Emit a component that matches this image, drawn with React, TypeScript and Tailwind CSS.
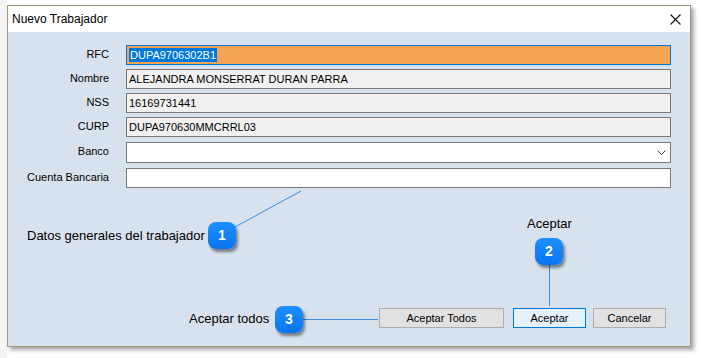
import React from "react";

const Field = ({
  label,
  children,
  className,
  mt,
}: {
  label: string;
  children?: React.ReactNode;
  className: string;
  mt: string;
}) => (
  <div className={`flex items-center ${mt}`}>
    <div className="w-[101px] shrink-0 text-right text-[11px] leading-[14px] text-[#000] -mt-[3px]">{label}</div>
    <div className={`ml-[17px] w-[545px] flex items-center pl-[2px] text-[11px] text-black ${className}`}>{children}</div>
  </div>
);

const Badge = ({ n, cls }: { n: string; cls: string }) => (
  <div
    className={`absolute w-[28px] h-[27px] rounded-[8px] bg-gradient-to-b from-[#1d8fff] to-[#0a75ee] text-white font-bold text-[14px] flex items-center justify-center shadow-[2px_3px_3px_rgba(0,0,0,0.45)] ${cls}`}
  >
    {n}
  </div>
);

export default function App() {
  return (
    <div className="w-[701px] h-[358px] bg-white relative overflow-hidden font-['Liberation_Sans',Arial,sans-serif]">
      <div className="absolute left-0 top-0 w-[7px] h-[358px] bg-[#f4f4f4]" />
      <div className="ml-[7px] mt-[5px] w-[684px] h-[342px] border border-[#9d9878] shadow-[3px_3px_4px_rgba(0,0,0,0.35)] flex flex-col relative">
        <div className="h-[26px] bg-white flex items-center justify-between pl-[4px] pr-[9px] shrink-0">
          <span className="text-[12px] text-black">Nuevo Trabajador</span>
          <svg width="11" height="11" viewBox="0 0 11 11">
            <path d="M0.5 0.5 L10.5 10.5 M10.5 0.5 L0.5 10.5" stroke="#111" strokeWidth="1.1" />
          </svg>
        </div>
        <div className="flex-1 bg-[#d8e2ee] relative flex flex-col">
          <div className="flex flex-col pt-[13px]">
            <Field label="RFC" mt="" className="h-[20px] border border-[#0078d7] bg-[#f5a454]">
              <span className="bg-[#0078d7] text-white leading-[14px] px-[1px]">DUPA9706302B1</span>
            </Field>
            <Field label="Nombre" mt="mt-[4px]" className="h-[20px] border border-[#7a7a7a] bg-[#f0f0f0]">
              ALEJANDRA MONSERRAT DURAN PARRA
            </Field>
            <Field label="NSS" mt="mt-[4px]" className="h-[20px] border border-[#7a7a7a] bg-[#f0f0f0]">
              16169731441
            </Field>
            <Field label="CURP" mt="mt-[4px]" className="h-[20px] border border-[#7a7a7a] bg-[#f0f0f0]">
              DUPA970630MMCRRL03
            </Field>
            <Field label="Banco" mt="mt-[5px]" className="h-[21px] border border-[#7a7a7a] bg-white justify-end pr-[4px]">
              <svg width="9" height="5" viewBox="0 0 9 5">
                <polyline points="0.5,0.5 4.5,4.5 8.5,0.5" fill="none" stroke="#444" strokeWidth="1" />
              </svg>
            </Field>
            <Field label="Cuenta Bancaria" mt="mt-[5px]" className="h-[20px] border border-[#7a7a7a] bg-white" />
          </div>
          <div className="flex-1" />
          <div className="flex justify-end pr-[24px] pb-[18px] text-[11px] text-black">
            <div className="w-[125px] h-[20px] border border-[#adadad] bg-[#e1e1e1] flex items-center justify-center">Aceptar Todos</div>
            <div className="ml-[9px] w-[73px] h-[20px] border border-[#0078d7] bg-[#e5f1fb] flex items-center justify-center">Aceptar</div>
            <div className="ml-[7px] w-[73px] h-[20px] border border-[#adadad] bg-[#e1e1e1] flex items-center justify-center">Cancelar</div>
          </div>

          <svg className="absolute inset-0 pointer-events-none" width="682" height="314">
            <line x1="293" y1="159" x2="227" y2="195" stroke="#3a8ee6" strokeWidth="1" />
            <line x1="541.5" y1="232" x2="541.5" y2="274" stroke="#3a8ee6" strokeWidth="1" />
            <line x1="295" y1="287.5" x2="370" y2="287.5" stroke="#3a8ee6" strokeWidth="1" />
          </svg>

          <div className="absolute left-[19px] top-[196px] text-[13px] leading-[16px] text-black whitespace-nowrap">Datos generales del trabajador</div>
          <Badge n="1" cls="left-[200px] top-[190px]" />
          <div className="absolute left-[519px] top-[184px] text-[13px] leading-[16px] text-black whitespace-nowrap">Aceptar</div>
          <Badge n="2" cls="left-[527px] top-[206px]" />
          <div className="absolute left-[181px] top-[279px] text-[13px] leading-[16px] text-black whitespace-nowrap">Aceptar todos</div>
          <Badge n="3" cls="left-[267px] top-[274px]" />
        </div>
      </div>
    </div>
  );
}
